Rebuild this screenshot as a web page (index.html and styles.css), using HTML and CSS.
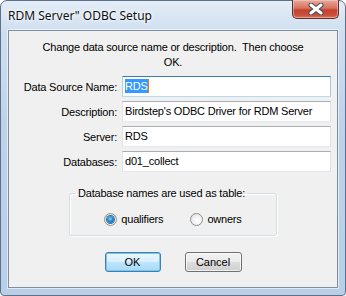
FILE: index.html
```html
<!DOCTYPE html>
<html lang="en">
<head>
  <meta charset="UTF-8" />
  <title>RDM Server" ODBC Setup</title>
  <link rel="stylesheet" href="styles.css">
</head>
<body>
  <div class="window">
    <div class="titlebar">
      <span class="title">RDM Server" ODBC Setup</span>
      <div class="close-btn">
        <svg width="16" height="12" viewBox="0 0 16 12">
          <path d="M3 2 L13 10 M13 2 L3 10" stroke="#3b4a5c" stroke-width="5" stroke-linecap="round"/>
          <path d="M3 2 L13 10 M13 2 L3 10" stroke="#ffffff" stroke-width="3" stroke-linecap="round"/>
        </svg>
      </div>
    </div>

    <div class="client">
      <p class="prompt">Change data source name or description.&nbsp; Then choose<br>OK.</p>

      <div class="fields">
        <label>Data Source Name:</label>
        <div class="field focused"><span class="sel">RDS</span></div>
        <label>Description:</label>
        <div class="field">Birdstep's ODBC Driver for RDM Server</div>
        <label>Server:</label>
        <div class="field">RDS</div>
        <label>Databases:</label>
        <div class="field">d01_collect</div>
      </div>

      <fieldset class="group">
        <legend>Database names are used as table:</legend>
        <div class="radios">
          <div class="radio-item"><span class="radio checked"></span>qualifiers</div>
          <div class="radio-item"><span class="radio"></span>owners</div>
        </div>
      </fieldset>

      <div class="buttons">
        <button class="btn default">OK</button>
        <button class="btn cancel">Cancel</button>
      </div>
    </div>
  </div>
</body>
</html>
```

FILE: styles.css
```css
body {
  margin: 0;
  padding: 0;
  background: #fff;
  font-family: "Liberation Sans", Arial, sans-serif;
  font-size: 11px;
  color: #000;
}

.window {
  width: 346px;
  height: 296px;
  box-sizing: border-box;
  border: 1px solid #5f7089;
  border-radius: 7px 7px 4px 4px;
  padding: 0 7px 7px 7px;
  background: linear-gradient(to bottom, #e4edf7 0, #cfdff0 30px, #bed3ea 120px, #b9cfe8 100%);
}

.titlebar {
  display: flex;
  height: 29px;
  margin: 0 -7px;
}

.title {
  font-family: "Noto Sans", "Open Sans", sans-serif;
  font-size: 12px;
  color: #111;
  padding: 6px 0 0 7px;
  text-shadow: 0 0 6px #fff, 0 0 3px #fff;
}

.close-btn {
  margin: -1px 6px 0 auto;
  width: 47px;
  height: 19px;
  box-sizing: border-box;
  border: 1px solid #5a3030;
  border-top: none;
  border-radius: 0 0 5px 5px;
  background: linear-gradient(to bottom, #e9a99b 0, #d9735f 45%, #c4422b 55%, #c9513a 85%, #d87a5e 100%);
  box-shadow: inset 0 0 0 1px rgba(255, 220, 210, 0.45);
  display: flex;
  align-items: center;
  justify-content: center;
}

.client {
  height: 258px;
  box-sizing: border-box;
  background: #f0f0f0;
  border: 1px solid #7f8fa2;
  box-shadow: 0 0 0 1px rgba(255, 255, 255, 0.55);
  letter-spacing: -0.2px;
}

.prompt {
  margin: 9px 0 0 0;
  text-align: center;
  line-height: 15px;
}

.fields {
  display: grid;
  grid-template-columns: 108px 209px;
  grid-auto-rows: 21px;
  column-gap: 5px;
  row-gap: 4px;
  margin-top: 6px;
}

.fields label {
  text-align: right;
  align-self: center;
}

.field {
  box-sizing: border-box;
  background: #fff;
  border: 1px solid;
  border-color: #abadb3 #dbdfe6 #e3e9ef #e2e3ea;
  padding: 0 2px;
  line-height: 19px;
  white-space: nowrap;
  overflow: hidden;
}

.field.focused {
  border-color: #3d7bad #a4c9e3 #b7d9ed #b5cfe7;
}

.sel {
  background: #3399ff;
  color: #fff;
  padding: 1px 0;
  border-right: 1px solid #e07a1f;
}

.group {
  width: 208px;
  box-sizing: border-box;
  margin: 14px auto 0 auto;
  padding: 11px 6px 8px 6px;
  border: 1px solid #d5dfe5;
  border-radius: 3px;
  box-shadow: inset 1px 1px 0 #fff, 1px 1px 0 #fff;
}

.group legend {
  padding: 0 2px;
  line-height: 15px;
}

.radios {
  display: flex;
  justify-content: center;
  gap: 27px;
  line-height: 15px;
}

.radio-item {
  display: flex;
  align-items: center;
  gap: 4px;
}

.radio {
  width: 13px;
  height: 13px;
  box-sizing: border-box;
  border-radius: 50%;
  border: 1px solid #8f8f8f;
  background: radial-gradient(circle at 60% 60%, #ffffff 0, #f4f4f4 40%, #d6d6d6 100%);
  display: flex;
  align-items: center;
  justify-content: center;
}

.radio.checked:after {
  content: "";
  width: 7px;
  height: 7px;
  border-radius: 50%;
  background: radial-gradient(circle at 45% 40%, #8fd6ff 0, #2a8fd6 40%, #0b4f8a 100%);
  box-shadow: 0 0 0 1px #3a6f9a;
}

.buttons {
  display: flex;
  justify-content: center;
  gap: 24px;
  margin-top: 16px;
}

.btn {
  height: 20px;
  padding: 0;
  font-family: "Liberation Sans", Arial, sans-serif;
  font-size: 11px;
  color: #000;
  border-radius: 3px;
  border: 1px solid #707070;
  background: linear-gradient(to bottom, #f2f2f2 0, #ebebeb 48%, #dddddd 52%, #cfcfcf 100%);
  box-shadow: inset 0 0 0 1px rgba(255, 255, 255, 0.7);
}

.btn.default {
  width: 56px;
  border-color: #3c7fb1;
  background: linear-gradient(to bottom, #eaf6fd 0, #d9f0fc 48%, #bee6fd 52%, #a7d9f5 100%);
  box-shadow: inset 0 0 0 1px #7ec5ed;
}

.btn.cancel {
  width: 57px;
}
```
